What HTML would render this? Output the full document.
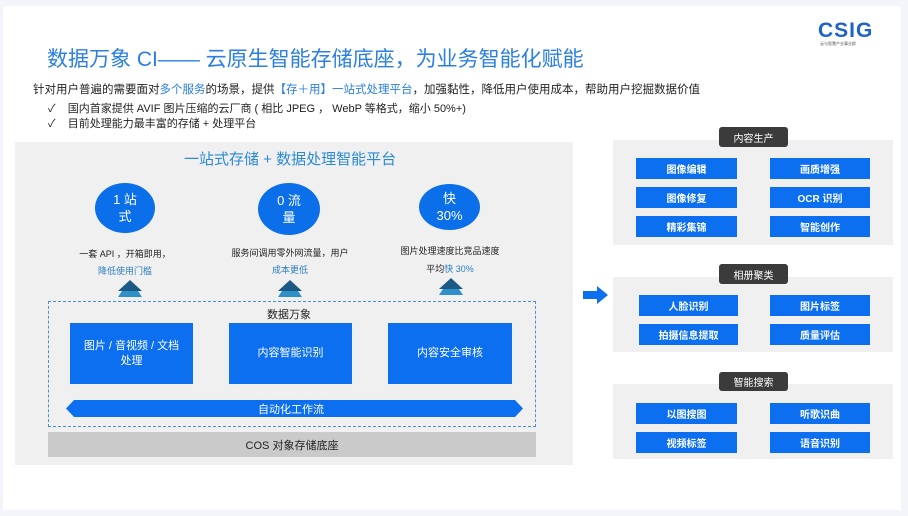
<!DOCTYPE html>
<html><head><meta charset="utf-8"><style>
*{margin:0;padding:0;box-sizing:border-box}
body{width:908px;height:516px;background:#f3f5fa;position:relative;overflow:hidden;font-family:"Liberation Sans","Noto Sans CJK SC",sans-serif;color:#222}
.a{position:absolute}
.slide{left:3px;top:6px;width:898px;height:504px;background:#fff}
.t{white-space:nowrap}
.circ{background:#0a6fe8;border-radius:50%;color:#fff;text-align:center;font-size:13px;line-height:17px;display:flex;align-items:center;justify-content:center}
.bb{background:#0b6fef;color:#fff;font-size:11px;display:flex;align-items:center;justify-content:center;text-align:center;line-height:15px}
.rb{background:#0b6fef;color:#fff;font-size:10px;font-weight:bold;display:flex;align-items:center;justify-content:center}
.g{background:#f0f0f0}
.lab{background:#3b3b3b;color:#fff;font-size:10px;border-radius:3px;display:flex;align-items:center;justify-content:center}
.sm{font-size:9px;text-align:center}
</style></head><body>
<div class="a slide"></div>
<div class="a t" style="left:47px;top:43px;font-size:21px;color:#2a7fe0">数据万象 CI—— 云原生智能存储底座，为业务智能化赋能</div>
<div class="a t" style="left:818px;top:19px;font-size:21px;font-weight:bold;color:#1f63c8;letter-spacing:1px">CSIG</div>
<div class="a t" style="left:820px;top:41px;font-size:4px;color:#555">云与智慧产业事业群</div>
<div class="a t" style="left:33px;top:81px;font-size:11.5px">针对用户普遍的需要面对<span style="color:#2a7fe0">多个服务</span>的场景，提供<span style="color:#2a7fe0">【存＋用】一站式处理平台</span>，加强黏性，降低用户使用成本，帮助用户挖掘数据价值</div>
<div class="a t" style="left:48px;top:100px;font-size:11px">✓&nbsp;&nbsp;&nbsp; 国内首家提供 AVIF 图片压缩的云厂商 ( 相比 JPEG ， WebP 等格式，缩小 50%+)</div>
<div class="a t" style="left:48px;top:115px;font-size:11px">✓&nbsp;&nbsp;&nbsp; 目前处理能力最丰富的存储 + 处理平台</div>

<div class="a g" style="left:15px;top:142px;width:558px;height:323px"></div>
<div class="a t" style="left:184px;top:148px;font-size:15px;color:#2a8ad8">一站式存储 + 数据处理智能平台</div>
<div class="a circ" style="left:95px;top:183px;width:60px;height:50px">1 站<br>式</div>
<div class="a circ" style="left:258px;top:183px;width:62px;height:52px">0 流<br>量</div>
<div class="a circ" style="left:419px;top:184px;width:61px;height:46px">快<br>30%</div>
<div class="a sm" style="left:65px;top:246px;width:120px;line-height:17px">一套 API ，开箱即用，<br><span style="color:#2a7fc0">降低使用门槛</span></div>
<div class="a sm" style="left:220px;top:245px;width:140px;line-height:17px">服务间调用零外网流量，用户<br><span style="color:#2a7fc0">成本更低</span></div>
<div class="a sm" style="left:385px;top:242px;width:130px;line-height:18px">图片处理速度比竞品速度<br>平均<span style="color:#2a7fc0">快 30%</span></div>
<svg class="a" style="left:0;top:276px" width="560" height="24">
<g fill="#1c5a86"><polygon points="130,4 118,15 142,15"/><polygon points="290,4 278,15 302,15"/><polygon points="451,2 439,13 463,13"/></g>
<g fill="#2f8fc8"><polygon points="122,15 138,15 142,21 118,21"/><polygon points="282,15 298,15 302,21 278,21"/><polygon points="443,13 459,13 463,19 439,19"/></g>
</svg>
<div class="a" style="left:48px;top:301px;width:488px;height:126px;border:1.5px dashed #4a90d9"></div>
<div class="a t" style="left:267px;top:306px;font-size:11px">数据万象</div>
<div class="a bb" style="left:70px;top:323px;width:123px;height:61px">图片 / 音视频 / 文档<br>处理</div>
<div class="a bb" style="left:229px;top:323px;width:123px;height:61px">内容智能识别</div>
<div class="a bb" style="left:388px;top:323px;width:124px;height:61px">内容安全审核</div>
<svg class="a" style="left:66px;top:400px" width="458" height="17"><polygon points="0,8.5 8,0 449,0 457,8.5 449,17 8,17" fill="#0b6fef"/></svg>
<div class="a t" style="left:258px;top:401px;font-size:11px;color:#fff">自动化工作流</div>
<div class="a" style="left:48px;top:432px;width:488px;height:25px;background:#cacaca;font-size:11px;display:flex;align-items:center;justify-content:center">COS 对象存储底座</div>

<svg class="a" style="left:583px;top:286px" width="26" height="18"><polygon points="0,5 14,5 14,0 25,9 14,18 14,13 0,13" fill="#0b6fef"/></svg>

<div class="a g" style="left:613px;top:140px;width:280px;height:105px"></div>
<div class="a lab" style="left:719px;top:127px;width:69px;height:20px">内容生产</div>
<div class="a rb" style="left:636px;top:158px;width:101px;height:21px">图像编辑</div>
<div class="a rb" style="left:770px;top:158px;width:100px;height:21px">画质增强</div>
<div class="a rb" style="left:636px;top:187px;width:101px;height:21px">图像修复</div>
<div class="a rb" style="left:770px;top:187px;width:100px;height:21px">OCR 识别</div>
<div class="a rb" style="left:636px;top:216px;width:101px;height:21px">精彩集锦</div>
<div class="a rb" style="left:770px;top:216px;width:100px;height:21px">智能创作</div>

<div class="a g" style="left:613px;top:277px;width:280px;height:75px"></div>
<div class="a lab" style="left:719px;top:264px;width:69px;height:20px">相册聚类</div>
<div class="a rb" style="left:639px;top:295px;width:99px;height:21px">人脸识别</div>
<div class="a rb" style="left:770px;top:295px;width:100px;height:21px">图片标签</div>
<div class="a rb" style="left:639px;top:324px;width:99px;height:21px">拍摄信息提取</div>
<div class="a rb" style="left:770px;top:324px;width:100px;height:21px">质量评估</div>

<div class="a g" style="left:613px;top:384px;width:280px;height:75px"></div>
<div class="a lab" style="left:719px;top:372px;width:69px;height:19px">智能搜索</div>
<div class="a rb" style="left:636px;top:403px;width:101px;height:21px">以图搜图</div>
<div class="a rb" style="left:770px;top:403px;width:100px;height:21px">听歌识曲</div>
<div class="a rb" style="left:636px;top:432px;width:101px;height:21px">视频标签</div>
<div class="a rb" style="left:770px;top:432px;width:100px;height:21px">语音识别</div>
</body></html>
